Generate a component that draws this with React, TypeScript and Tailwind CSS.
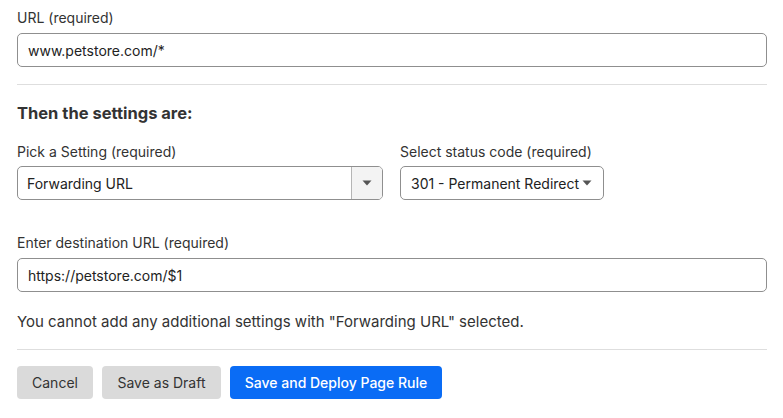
import React from "react";

const Caret = () => (
    <svg width="10" height="6" viewBox="0 0 10 6" className="shrink-0">
        <path d="M0.5 0.5h9L5 5.5z" fill="#555" />
    </svg>
);

export default function App() {
    return (
        <div
            className="w-[783px] h-[418px] bg-white pl-[17px] pr-[16px] pt-[10px] text-[#333] flex flex-col"
            style={{ fontFamily: "Inter, 'Noto Sans', Arial, sans-serif" }}
        >
            {/* URL */}
            <label className="text-[14px] leading-4">URL (required)</label>
            <div className="mt-[7px] h-[34px] border border-[#8f8f8f] rounded-[5px] flex items-center px-[10px] text-[14px] text-[#222]">
                www.petstore.com/*
            </div>

            <div className="mt-[17px] h-px bg-[#dedede]" />

            <h3 className="mt-[18px] text-[16.5px] leading-5 font-bold text-[#333]">Then the settings are:</h3>

            {/* Setting + status */}
            <div className="mt-[21px] flex gap-[17px]">
                <div className="flex flex-col">
                    <label className="text-[14px] leading-4">Pick a Setting (required)</label>
                    <div className="mt-[6px] w-[366px] h-[34px] border border-[#8f8f8f] rounded-[5px] flex overflow-hidden">
                        <div className="flex-1 flex items-center px-[9px] text-[14px] text-[#222]">Forwarding URL</div>
                        <div className="w-[31px] border-l border-[#b5b5b5] bg-[#f3f3f3] flex items-center justify-center">
                            <Caret />
                        </div>
                    </div>
                </div>
                <div className="flex flex-col">
                    <label className="text-[14px] leading-4">Select status code (required)</label>
                    <div className="mt-[6px] w-[204px] h-[34px] border border-[#8f8f8f] rounded-[5px] flex items-center gap-[3px] pl-[10px] text-[14px] text-[#222]">
                        <span>301 - Permanent Redirect</span>
                        <Caret />
                    </div>
                </div>
            </div>

            {/* Destination */}
            <label className="mt-[35px] text-[14px] leading-4">Enter destination URL (required)</label>
            <div className="mt-[7px] h-[34px] border border-[#8f8f8f] rounded-[5px] flex items-center px-[10px] text-[14px] text-[#222]">
                https://petstore.com/$1
            </div>

            <p className="mt-[20px] text-[15px] leading-5 text-[#333]">
                You cannot add any additional settings with "Forwarding URL" selected.
            </p>

            <div className="mt-[17px] h-px bg-[#dedede]" />

            {/* Actions */}
            <div className="mt-[16px] flex gap-[9px]">
                <button className="w-[76px] h-[33px] rounded-[4px] bg-[#dadada] text-[14px] text-[#333]">Cancel</button>
                <button className="w-[119px] h-[33px] rounded-[4px] bg-[#dadada] text-[14px] text-[#333]">Save as Draft</button>
                <button className="w-[212px] h-[33px] rounded-[4px] bg-[#0a6cf5] text-[14px] font-medium text-white">
                    Save and Deploy Page Rule
                </button>
            </div>
        </div>
    );
}
